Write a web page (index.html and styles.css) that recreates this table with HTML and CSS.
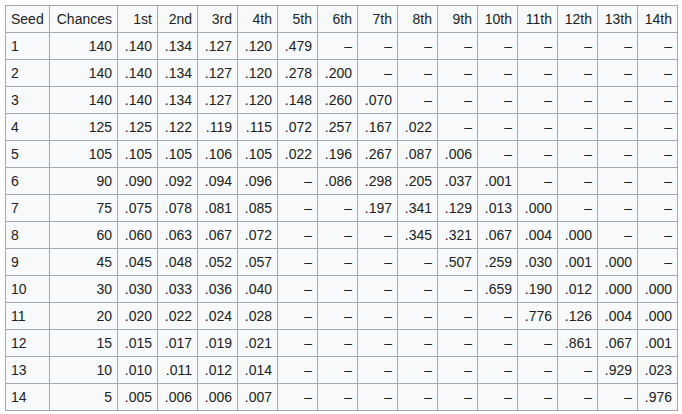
FILE: index.html
```html
<!DOCTYPE html>
<html>
<head>
<meta charset="utf-8">
<link rel="stylesheet" href="styles.css">
</head>
<body>
<table class="odds">
<colgroup>
<col class="c-seed"><col class="c-chances">
<col class="c-pick"><col class="c-pick"><col class="c-pick"><col class="c-pick"><col class="c-pick"><col class="c-pick"><col class="c-pick"><col class="c-pick"><col class="c-pick"><col class="c-pick"><col class="c-pick"><col class="c-pick"><col class="c-pick"><col class="c-pick">
</colgroup>
<thead>
<tr><th class="seed">Seed</th><th>Chances</th><th>1st</th><th>2nd</th><th>3rd</th><th>4th</th><th>5th</th><th>6th</th><th>7th</th><th>8th</th><th>9th</th><th>10th</th><th>11th</th><th>12th</th><th>13th</th><th>14th</th></tr>
</thead>
<tbody>
<tr><td class="seed">1</td><td>140</td><td>.140</td><td>.134</td><td>.127</td><td>.120</td><td>.479</td><td>–</td><td>–</td><td>–</td><td>–</td><td>–</td><td>–</td><td>–</td><td>–</td><td>–</td></tr>
<tr><td class="seed">2</td><td>140</td><td>.140</td><td>.134</td><td>.127</td><td>.120</td><td>.278</td><td>.200</td><td>–</td><td>–</td><td>–</td><td>–</td><td>–</td><td>–</td><td>–</td><td>–</td></tr>
<tr><td class="seed">3</td><td>140</td><td>.140</td><td>.134</td><td>.127</td><td>.120</td><td>.148</td><td>.260</td><td>.070</td><td>–</td><td>–</td><td>–</td><td>–</td><td>–</td><td>–</td><td>–</td></tr>
<tr><td class="seed">4</td><td>125</td><td>.125</td><td>.122</td><td>.119</td><td>.115</td><td>.072</td><td>.257</td><td>.167</td><td>.022</td><td>–</td><td>–</td><td>–</td><td>–</td><td>–</td><td>–</td></tr>
<tr><td class="seed">5</td><td>105</td><td>.105</td><td>.105</td><td>.106</td><td>.105</td><td>.022</td><td>.196</td><td>.267</td><td>.087</td><td>.006</td><td>–</td><td>–</td><td>–</td><td>–</td><td>–</td></tr>
<tr><td class="seed">6</td><td>90</td><td>.090</td><td>.092</td><td>.094</td><td>.096</td><td>–</td><td>.086</td><td>.298</td><td>.205</td><td>.037</td><td>.001</td><td>–</td><td>–</td><td>–</td><td>–</td></tr>
<tr><td class="seed">7</td><td>75</td><td>.075</td><td>.078</td><td>.081</td><td>.085</td><td>–</td><td>–</td><td>.197</td><td>.341</td><td>.129</td><td>.013</td><td>.000</td><td>–</td><td>–</td><td>–</td></tr>
<tr><td class="seed">8</td><td>60</td><td>.060</td><td>.063</td><td>.067</td><td>.072</td><td>–</td><td>–</td><td>–</td><td>.345</td><td>.321</td><td>.067</td><td>.004</td><td>.000</td><td>–</td><td>–</td></tr>
<tr><td class="seed">9</td><td>45</td><td>.045</td><td>.048</td><td>.052</td><td>.057</td><td>–</td><td>–</td><td>–</td><td>–</td><td>.507</td><td>.259</td><td>.030</td><td>.001</td><td>.000</td><td>–</td></tr>
<tr><td class="seed">10</td><td>30</td><td>.030</td><td>.033</td><td>.036</td><td>.040</td><td>–</td><td>–</td><td>–</td><td>–</td><td>–</td><td>.659</td><td>.190</td><td>.012</td><td>.000</td><td>.000</td></tr>
<tr><td class="seed">11</td><td>20</td><td>.020</td><td>.022</td><td>.024</td><td>.028</td><td>–</td><td>–</td><td>–</td><td>–</td><td>–</td><td>–</td><td>.776</td><td>.126</td><td>.004</td><td>.000</td></tr>
<tr><td class="seed">12</td><td>15</td><td>.015</td><td>.017</td><td>.019</td><td>.021</td><td>–</td><td>–</td><td>–</td><td>–</td><td>–</td><td>–</td><td>–</td><td>.861</td><td>.067</td><td>.001</td></tr>
<tr><td class="seed">13</td><td>10</td><td>.010</td><td>.011</td><td>.012</td><td>.014</td><td>–</td><td>–</td><td>–</td><td>–</td><td>–</td><td>–</td><td>–</td><td>–</td><td>.929</td><td>.023</td></tr>
<tr><td class="seed">14</td><td>5</td><td>.005</td><td>.006</td><td>.006</td><td>.007</td><td>–</td><td>–</td><td>–</td><td>–</td><td>–</td><td>–</td><td>–</td><td>–</td><td>–</td><td>.976</td></tr>
</tbody>
</table>
</body>
</html>
```

FILE: styles.css
```css
html, body {
  margin: 0;
  padding: 0;
  background: #ffffff;
}
body {
  padding: 5px 0 0 5px;
  font-family: "Liberation Sans", Arial, sans-serif;
  font-size: 14px;
  color: #202122;
}
.odds {
  border-collapse: collapse;
  table-layout: fixed;
  width: 672px;
  background: #f8f9fa;
}
.c-seed { width: 44px; }
.c-chances { width: 68px; }
.c-pick { width: 40px; }
.odds th,
.odds td {
  border: 1px solid #a2a9b1;
  height: 26px;
  padding: 0 5px 0 5px;
  text-align: right;
  vertical-align: middle;
  font-weight: normal;
  white-space: nowrap;
  line-height: 16px;
}
.odds .seed {
  text-align: left;
}
```
